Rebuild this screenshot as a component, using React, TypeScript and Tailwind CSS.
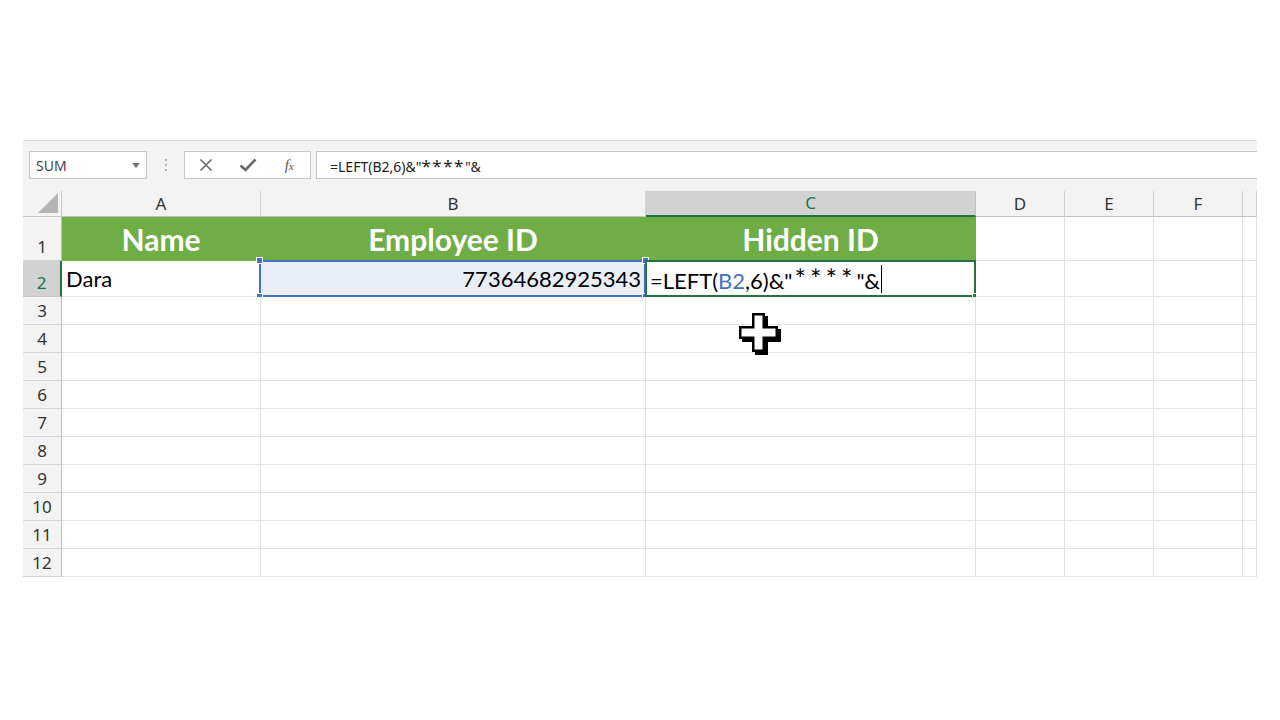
import React from 'react';

const ui = { fontFamily: '"Noto Sans", "Open Sans", sans-serif' };
const cellFont = { fontFamily: 'Lato, "Noto Sans", sans-serif' };

const COLS = ['A', 'B', 'C', 'D', 'E', 'F', ''];
const ROWS = [1, 2, 3, 4, 5, 6, 7, 8, 9, 10, 11, 12];

const Handle: React.FC<{ pos: string; color: string }> = ({ pos, color }) => (
  <div className={`absolute w-[7px] h-[7px] border border-white ${pos} ${color}`}></div>
);

const CrossCursor = () => (
  <svg width="46" height="46" viewBox="0 0 46 46" className="absolute left-[93px] -top-[12px] z-10 pointer-events-none">
    <polygon points="16,3 29,3 29,16 42,16 42,29 29,29 29,42 16,42 16,29 3,29 3,16 16,16" fill="#000" />
    <polygon points="13,0 26,0 26,13 39,13 39,26 26,26 26,39 13,39 13,26 0,26 0,13 13,13" fill="#000" />
    <polygon points="15.5,2.5 23.5,2.5 23.5,15.5 36.5,15.5 36.5,23.5 23.5,23.5 23.5,36.5 15.5,36.5 15.5,23.5 2.5,23.5 2.5,15.5 15.5,15.5" fill="#fff" />
  </svg>
);

const FormulaBar = () => (
  <div className="h-[51px] flex items-start pt-[10px] border-t border-[#dadada] bg-[#f3f3f3]" style={ui}>
    <div className="ml-[6px] w-[118px] h-[28px] bg-white border border-[#c6c6c6] flex items-center justify-between pl-[6px] pr-[6px]">
      <span className="text-[14px] text-[#444]">SUM</span>
      <svg width="8" height="5" viewBox="0 0 8 5"><polygon points="0,0 8,0 4,5" fill="#777" /></svg>
    </div>
    <div className="w-[37px] h-[28px] flex flex-col items-center justify-center gap-[3px]">
      <div className="w-[2px] h-[2px] bg-[#b5b5b5]"></div>
      <div className="w-[2px] h-[2px] bg-[#b5b5b5]"></div>
      <div className="w-[2px] h-[2px] bg-[#b5b5b5]"></div>
    </div>
    <div className="w-[127px] h-[28px] bg-white border border-[#c6c6c6] flex items-center">
      <div className="w-[42px] flex justify-center">
        <svg width="14" height="14" viewBox="0 0 14 14"><path d="M1.5 1.5 L12.5 12.5 M12.5 1.5 L1.5 12.5" stroke="#6a6a6a" strokeWidth="1.6" /></svg>
      </div>
      <div className="w-[42px] flex justify-center">
        <svg width="18" height="14" viewBox="0 0 18 14"><path d="M1.5 7.5 L6.5 12 L16.5 1.5" stroke="#6a6a6a" strokeWidth="2.6" fill="none" /></svg>
      </div>
      <div className="w-[42px] flex justify-center">
        <span className="text-[15px] italic text-[#555]" style={{ fontFamily: '"Liberation Serif", serif' }}>f<span className="text-[11px]">x</span></span>
      </div>
    </div>
    <div className="ml-[5px] flex-1 h-[28px] bg-white border-y border-l border-[#c6c6c6] flex items-center pl-[13px]">
      <span className="text-[14px] text-[#222] leading-none">
        =LEFT(B2,6)&amp;"<span className="text-[17px] tracking-[1.5px]">****</span>"&amp;
      </span>
    </div>
  </div>
);

const HeaderRow = () => (
  <>
    <div className="bg-[#f3f3f3] border-r border-b border-[#c8c8c8] flex items-end justify-end pr-[3px] pb-[3px]">
      <svg width="20" height="20" viewBox="0 0 20 20"><polygon points="20,0 20,20 0,20" fill="#b4b4b4" /></svg>
    </div>
    {COLS.map((c, i) => {
      const sel = c === 'C';
      return (
        <div
          key={i}
          className={`flex items-center justify-center border-r ${sel ? 'bg-[#d2d2d2] border-b-2 border-b-[#217346] text-[#217346] border-r-[#c0c0c0]' : 'bg-[#f3f3f3] border-b border-b-[#c0c0c0] text-[#333] border-r-[#d0d0d0]'} text-[17px]`}
          style={ui}
        >
          {c}
        </div>
      );
    })}
  </>
);

const Cell: React.FC<{ r: number; c: number }> = ({ r, c }) => {
  const green = r === 1 && c < 3;
  const base = 'relative border-r border-b';
  if (green) {
    const labels = ['Name', 'Employee ID', 'Hidden ID'];
    return (
      <div className={`${base} bg-[#70ad47] border-[#70ad47] flex items-center justify-center pt-[2px]`}>
        <span className="text-white font-bold text-[30px]" style={cellFont}>{labels[c]}</span>
      </div>
    );
  }
  if (r === 2 && c === 0) {
    return (
      <div className={`${base} border-[#e1e1e1] bg-white flex items-center pl-[4px]`}>
        <span className="text-[22px] text-black" style={cellFont}>Dara</span>
      </div>
    );
  }
  if (r === 2 && c === 1) {
    return (
      <div className={`${base} border-[#e1e1e1] bg-[#e9eef8] flex items-center justify-end pr-[4px]`}>
        <span className="text-[22px] text-black" style={cellFont}>77364682925343</span>
        <div className="absolute -left-[2px] -top-[1px] -right-[1px] -bottom-[1px] border-2 border-[#4472c4]"></div>
        <Handle pos="-left-[5px] -top-[4px]" color="bg-[#4472c4]" />
        <Handle pos="-right-[4px] -top-[4px]" color="bg-[#4472c4]" />
        <Handle pos="-left-[5px] -bottom-[4px]" color="bg-[#4472c4]" />
        <Handle pos="-right-[4px] -bottom-[4px]" color="bg-[#4472c4]" />
      </div>
    );
  }
  if (r === 2 && c === 2) {
    return (
      <div className={`${base} border-[#e1e1e1] bg-white flex items-center pl-[4px]`}>
        <span className="text-[22px] text-black leading-none" style={cellFont}>
          =LEFT(<span className="text-[#4472c4]">B2</span>,6)&amp;<span className="tracking-[2px]">"</span><span className="text-[27px] tracking-[4px]">****</span>"&amp;
        </span>
        <div className="w-[1px] h-[28px] bg-black ml-[1px]"></div>
        <div className="absolute -left-[1px] -top-[1px] -right-[1px] -bottom-[1px] border-2 border-[#217346]"></div>
        <div className="absolute -right-[4px] -bottom-[4px] w-[7px] h-[7px] bg-[#217346] border border-white"></div>
      </div>
    );
  }
  return (
    <div className={`${base} border-[#e1e1e1] bg-white`}>
      {r === 4 && c === 2 && <CrossCursor />}
    </div>
  );
};

export default function App() {
  return (
    <div className="w-[1280px] h-[720px] bg-white overflow-hidden">
      <div className="h-[140px]"></div>
      <div className="ml-[23px] w-[1234px]">
        <FormulaBar />
        <div className="grid grid-cols-[39px_199px_385px_330px_89px_89px_89px_14px] grid-rows-[26px_44px_36px_repeat(10,28px)] bg-[#f3f3f3]">
          <HeaderRow />
          {ROWS.map((r) => (
            <React.Fragment key={r}>
              <div
                className={`flex items-end justify-center pb-[1px] border-b text-[17px] ${r === 2 ? 'bg-[#d2d2d2] border-r-2 border-r-[#217346] text-[#217346] border-b-[#c8c8c8]' : 'bg-[#f3f3f3] border-r border-r-[#c0c0c0] text-[#333] border-b-[#d4d4d4]'}`}
                style={ui}
              >
                {r}
              </div>
              {COLS.map((_, c) => (
                <Cell key={c} r={r} c={c} />
              ))}
            </React.Fragment>
          ))}
        </div>
      </div>
    </div>
  );
}
